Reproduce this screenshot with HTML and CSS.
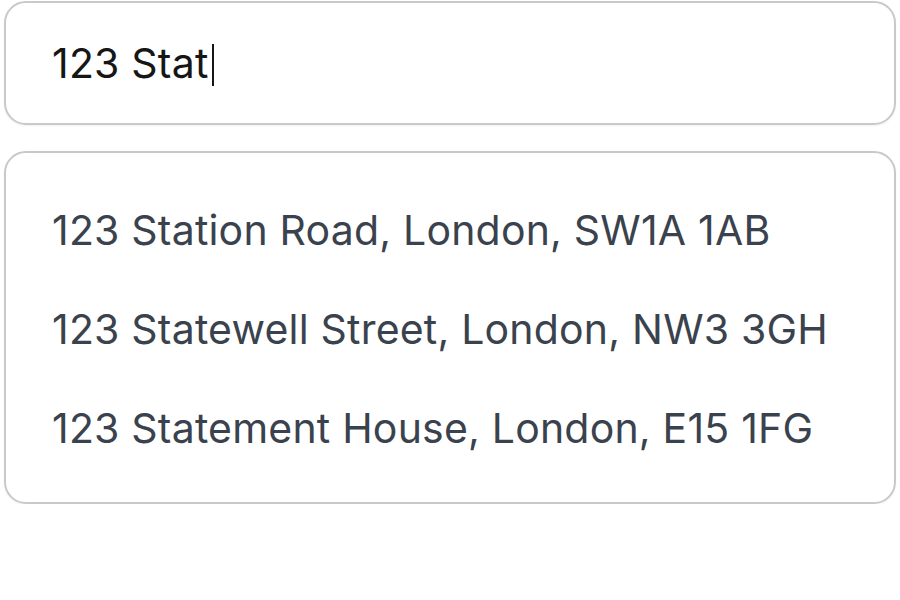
FILE: index.html
```html
<!DOCTYPE html>
<html>
<head>
<meta charset="utf-8">
<link rel="stylesheet" href="styles.css">
</head>
<body>
<div class="wrap">
  <div class="input"><span class="typed">123 Stat</span><span class="caret"></span></div>
  <ul class="list">
    <li class="item">123 Station Road, London, SW1A 1AB</li>
    <li class="item">123 Statewell Street, London, NW3 3GH</li>
    <li class="item">123 Statement House, London, E15 1FG</li>
  </ul>
</div>
</body>
</html>
```
FILE: styles.css
```css
* { box-sizing: border-box; }
html, body { margin: 0; padding: 0; background: #fff; }
body { font-family: Inter, "Noto Sans", sans-serif; }
.wrap { padding: 1px 4px 0 4px; display: flex; flex-direction: column; gap: 26px; }
.input {
  height: 124px;
  border: 2px solid #c9c9c9;
  border-radius: 22px;
  display: flex;
  align-items: center;
  padding-left: 46px;
  font-size: 41px;
  letter-spacing: 0.2px;
  color: #161616;
  box-shadow: 0 1px 2px rgba(0,0,0,0.06);
}
.caret { display: inline-block; width: 2px; height: 42px; background: #161616; margin-left: 3px; margin-top: 4px; }
.list {
  margin: 0;
  list-style: none;
  border: 2px solid #c9c9c9;
  border-radius: 22px;
  padding: 27px 0 25px 46px;
  box-shadow: 0 1px 2px rgba(0,0,0,0.06);
}
.item { height: 99px; display: flex; align-items: center; font-size: 41px; letter-spacing: 0.2px; color: #3a424d; }
```
